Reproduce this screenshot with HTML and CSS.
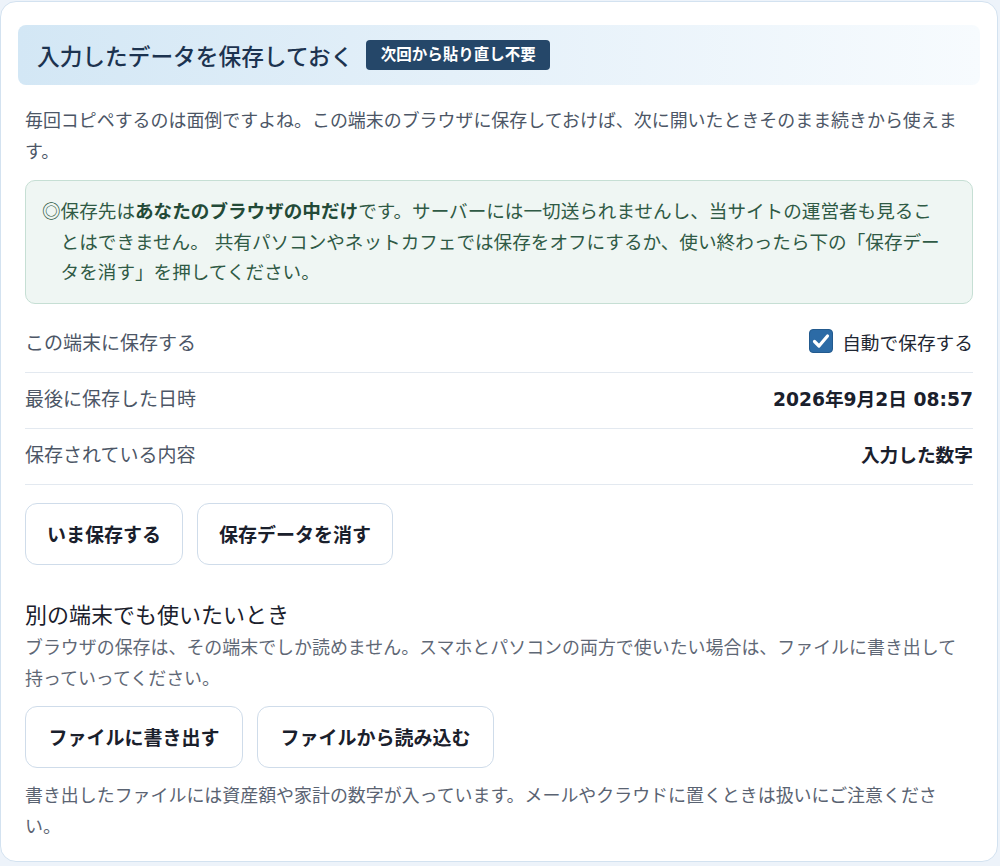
FILE: index.html
```html
<!DOCTYPE html>
<html lang="ja">
<head>
<meta charset="utf-8">
<link rel="stylesheet" href="styles.css">
</head>
<body>
<div class="card">
  <div class="head">
    <h2 class="title">入力したデータを保存しておく</h2>
    <span class="badge">次回から貼り直し不要</span>
  </div>
  <p class="lead">毎回コピペするのは面倒ですよね。この端末のブラウザに保存しておけば、次に開いたときそのまま続きから使えます。</p>
  <div class="note">
    <p><span class="mark">◎</span>保存先は<strong>あなたのブラウザの中だけ</strong>です。サーバーには一切送られませんし、当サイトの運営者も見ることはできません。 共有パソコンやネットカフェでは保存をオフにするか、使い終わったら下の「保存データを消す」を押してください。</p>
  </div>
  <div class="rows">
    <div class="row">
      <span class="label">この端末に保存する</span>
      <label class="check"><span class="box"><svg viewBox="0 0 24 24" width="24" height="24"><rect x="0.5" y="0.5" width="23" height="23" rx="3.5" fill="#2c6ba6" stroke="#235a8e"/><path d="M5.5 12.5 L10 17 L18.5 7" fill="none" stroke="#fff" stroke-width="3.2" stroke-linecap="round" stroke-linejoin="round"/></svg></span>自動で保存する</label>
    </div>
    <div class="row">
      <span class="label">最後に保存した日時</span>
      <span class="value">2026年9月2日 08:57</span>
    </div>
    <div class="row">
      <span class="label">保存されている内容</span>
      <span class="value">入力した数字</span>
    </div>
  </div>
  <div class="btns first">
    <button class="btn">いま保存する</button>
    <button class="btn">保存データを消す</button>
  </div>
  <h3 class="sub-head">別の端末でも使いたいとき</h3>
  <p class="sub">ブラウザの保存は、その端末でしか読めません。スマホとパソコンの両方で使いたい場合は、ファイルに書き出して持っていってください。</p>
  <div class="btns">
    <button class="btn wide">ファイルに書き出す</button>
    <button class="btn wide">ファイルから読み込む</button>
  </div>
  <p class="foot">書き出したファイルには資産額や家計の数字が入っています。メールやクラウドに置くときは扱いにご注意ください。</p>
</div>
</body>
</html>
```
FILE: styles.css
```css
* { box-sizing: border-box; }
html, body { margin: 0; padding: 0; }
body {
  background: #edf3fa;
  font-family: "DejaVu Sans", "Noto Sans CJK JP", sans-serif;
  padding: 1px 2px 0 0;
}
.card {
  background: #fff;
  border: 1.5px solid #d3e2f0;
  border-radius: 16px;
  height: 861px;
  padding: 23px 24px 0 24px;
}
.head {
  margin: 0 -7px;
  height: 60px;
  border-radius: 8px;
  background: linear-gradient(90deg, #d3e7f5 0%, #e4f0f9 45%, #f7fbfe 100%);
  display: flex;
  align-items: center;
  gap: 13px;
  padding: 0 19px;
}
.title {
  margin: 0;
  font-size: 22.7px;
  font-weight: 500;
  color: #1c3350;
}
.badge {
  background: #254769;
  color: #fff;
  font-size: 15.5px;
  font-weight: 700;
  height: 30px;
  line-height: 30px;
  padding: 0 14.5px;
  border-radius: 4px;
}
.lead, .sub, .foot {
  margin: 20px 0 0;
  font-size: 17.95px;
  line-height: 31px;
  color: #4c5666;
}
.note {
  margin-top: 13px;
  background: #eff6f3;
  border: 1.5px solid #c6dfd4;
  border-radius: 10px;
  padding: 14px 22px 14px 16px;
}
.note p {
  margin: 0;
  font-size: 18.6px;
  line-height: 30.5px;
  color: #2f5a45;
  padding-left: 18.6px;
  text-indent: -18.6px;
}
.mark { font-family: "Noto Sans CJK JP", sans-serif; }
.note strong { color: #234a37; font-weight: 700; }
.rows { margin-top: 13px; }
.row {
  height: 56px;
  padding-bottom: 6px;
  border-bottom: 1.5px solid #e3e9f0;
  display: flex;
  align-items: center;
  justify-content: space-between;
}
.label {
  font-size: 19px;
  color: #4c5666;
}
.check {
  display: flex;
  align-items: center;
  gap: 9px;
  font-size: 18.7px;
  color: #1f2733;
}
.box { display: block; width: 24px; height: 24px; }
.box svg { display: block; }
.value {
  font-size: 18.7px;
  font-weight: 700;
  color: #1a202c;
}
.btns {
  display: flex;
  gap: 14px;
  margin-top: 12px;
}
.btns.first { margin-top: 18px; }
.btn {
  height: 62px;
  padding: 0 21px;
  background: #fff;
  border: 1.5px solid #cfdcea;
  border-radius: 12px;
  font-family: inherit;
  font-size: 19px;
  font-weight: 700;
  color: #1a202c;
}
.btn.wide { padding: 0 22.5px; }
.sub-head {
  margin: 36px 0 0;
  font-size: 22px;
  font-weight: 400;
  line-height: 30px;
  color: #1a202c;
}
.sub { margin-top: 1px; color: #5f6876; }
.foot { margin-top: 12px; padding-right: 8px; color: #5a6372; }
```
